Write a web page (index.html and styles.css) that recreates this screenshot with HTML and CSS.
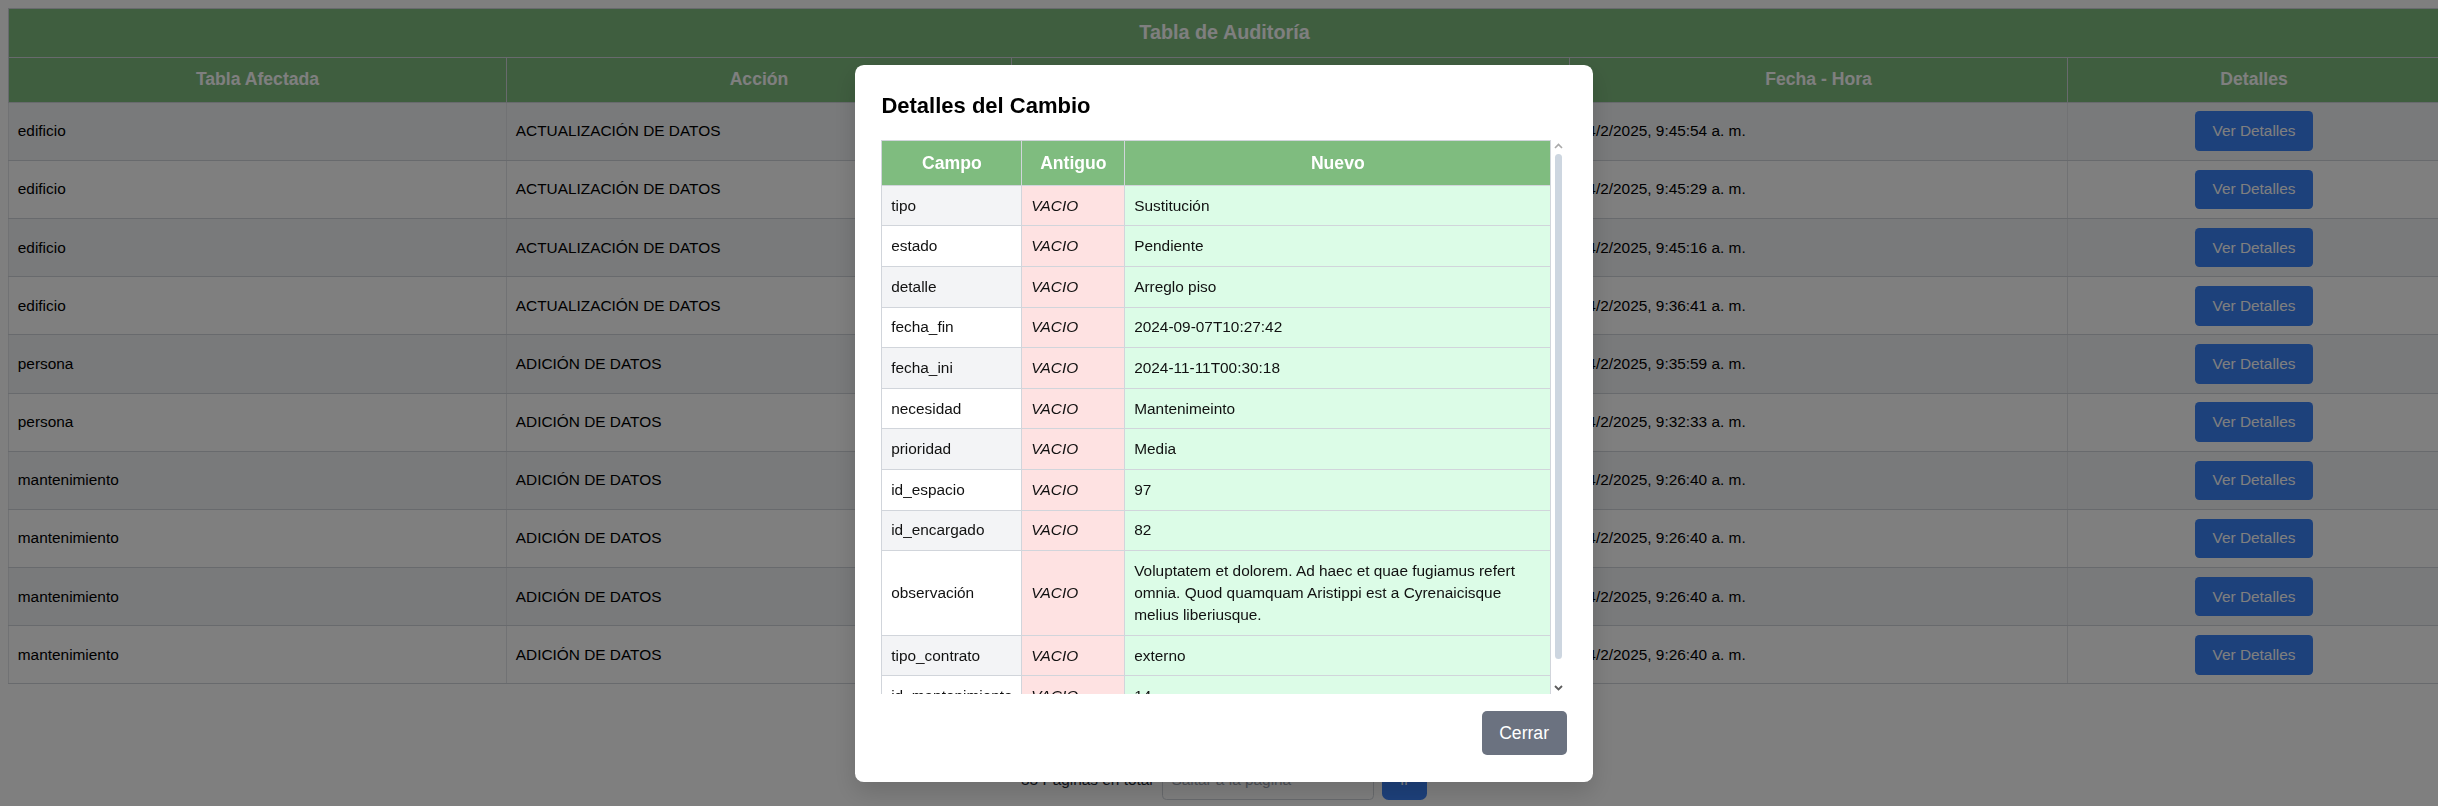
FILE: index.html
```html
<!DOCTYPE html>
<html lang="es">
<head>
<meta charset="utf-8">
<title>Tabla de Auditoría</title>
<link rel="stylesheet" href="styles.css">
</head>
<body>
<main class="page">
  <table class="audit">
    <colgroup>
      <col class="c-tabla"><col class="c-accion"><col class="c-usuario"><col class="c-fecha"><col class="c-detalles">
    </colgroup>
    <thead>
      <tr><th colspan="5" class="audit-title">Tabla de Auditoría</th></tr>
      <tr><th>Tabla Afectada</th><th>Acción</th><th>Usuario</th><th>Fecha - Hora</th><th>Detalles</th></tr>
    </thead>
    <tbody>
      <tr><td>edificio</td><td>ACTUALIZACIÓN DE DATOS</td><td>admin</td><td>14/2/2025, 9:45:54 a. m.</td><td class="cell-btn"><button class="btn-blue">Ver Detalles</button></td></tr>
      <tr><td>edificio</td><td>ACTUALIZACIÓN DE DATOS</td><td>admin</td><td>14/2/2025, 9:45:29 a. m.</td><td class="cell-btn"><button class="btn-blue">Ver Detalles</button></td></tr>
      <tr><td>edificio</td><td>ACTUALIZACIÓN DE DATOS</td><td>admin</td><td>14/2/2025, 9:45:16 a. m.</td><td class="cell-btn"><button class="btn-blue">Ver Detalles</button></td></tr>
      <tr><td>edificio</td><td>ACTUALIZACIÓN DE DATOS</td><td>admin</td><td>14/2/2025, 9:36:41 a. m.</td><td class="cell-btn"><button class="btn-blue">Ver Detalles</button></td></tr>
      <tr><td>persona</td><td>ADICIÓN DE DATOS</td><td>admin</td><td>14/2/2025, 9:35:59 a. m.</td><td class="cell-btn"><button class="btn-blue">Ver Detalles</button></td></tr>
      <tr><td>persona</td><td>ADICIÓN DE DATOS</td><td>admin</td><td>14/2/2025, 9:32:33 a. m.</td><td class="cell-btn"><button class="btn-blue">Ver Detalles</button></td></tr>
      <tr><td>mantenimiento</td><td>ADICIÓN DE DATOS</td><td>admin</td><td>14/2/2025, 9:26:40 a. m.</td><td class="cell-btn"><button class="btn-blue">Ver Detalles</button></td></tr>
      <tr><td>mantenimiento</td><td>ADICIÓN DE DATOS</td><td>admin</td><td>14/2/2025, 9:26:40 a. m.</td><td class="cell-btn"><button class="btn-blue">Ver Detalles</button></td></tr>
      <tr><td>mantenimiento</td><td>ADICIÓN DE DATOS</td><td>admin</td><td>14/2/2025, 9:26:40 a. m.</td><td class="cell-btn"><button class="btn-blue">Ver Detalles</button></td></tr>
      <tr><td>mantenimiento</td><td>ADICIÓN DE DATOS</td><td>admin</td><td>14/2/2025, 9:26:40 a. m.</td><td class="cell-btn"><button class="btn-blue">Ver Detalles</button></td></tr>
    </tbody>
  </table>

  <div class="pager">
    <span class="pager-total">33 Páginas en total</span>
    <input class="pager-input" type="text" placeholder="Saltar a la página">
    <button class="btn-blue pager-go">Ir</button>
  </div>
</main>

<div class="overlay">
  <div class="modal">
    <h2 class="modal-title">Detalles del Cambio</h2>
    <div class="scroll">
      <div class="scroll-view">
        <table class="diff">
          <colgroup><col class="d-campo"><col class="d-old"><col class="d-new"></colgroup>
          <thead>
            <tr><th>Campo</th><th>Antiguo</th><th>Nuevo</th></tr>
          </thead>
          <tbody>
            <tr><td class="f-campo">tipo</td><td class="f-old">VACIO</td><td class="f-new">Sustitución</td></tr>
            <tr><td class="f-campo">estado</td><td class="f-old">VACIO</td><td class="f-new">Pendiente</td></tr>
            <tr><td class="f-campo">detalle</td><td class="f-old">VACIO</td><td class="f-new">Arreglo piso</td></tr>
            <tr><td class="f-campo">fecha_fin</td><td class="f-old">VACIO</td><td class="f-new">2024-09-07T10:27:42</td></tr>
            <tr><td class="f-campo">fecha_ini</td><td class="f-old">VACIO</td><td class="f-new">2024-11-11T00:30:18</td></tr>
            <tr><td class="f-campo">necesidad</td><td class="f-old">VACIO</td><td class="f-new">Mantenimeinto</td></tr>
            <tr><td class="f-campo">prioridad</td><td class="f-old">VACIO</td><td class="f-new">Media</td></tr>
            <tr><td class="f-campo">id_espacio</td><td class="f-old">VACIO</td><td class="f-new">97</td></tr>
            <tr><td class="f-campo">id_encargado</td><td class="f-old">VACIO</td><td class="f-new">82</td></tr>
            <tr><td class="f-campo">observación</td><td class="f-old">VACIO</td><td class="f-new">Voluptatem et dolorem. Ad haec et quae fugiamus refert omnia. Quod quamquam Aristippi est a Cyrenaicisque melius liberiusque.</td></tr>
            <tr><td class="f-campo">tipo_contrato</td><td class="f-old">VACIO</td><td class="f-new">externo</td></tr>
            <tr><td class="f-campo">id_mantenimiento</td><td class="f-old">VACIO</td><td class="f-new">14</td></tr>
            <tr><td class="f-campo">id_empresa</td><td class="f-old">VACIO</td><td class="f-new">5</td></tr>
          </tbody>
        </table>
      </div>
      <div class="scrollbar" aria-hidden="true">
        <div class="sb-arrow">
          <svg class="sb-up" width="9" height="6" viewBox="0 0 9 6"><polyline points="1,5 4.5,1.5 8,5" fill="none" stroke="#a9a9a9" stroke-width="1.6"/></svg>
        </div>
        <div class="sb-track"><div class="sb-thumb"></div></div>
        <div class="sb-arrow">
          <svg class="sb-down" width="9" height="6" viewBox="0 0 9 6"><polyline points="1,1 4.5,4.5 8,1" fill="none" stroke="#5c5c5c" stroke-width="1.8"/></svg>
        </div>
      </div>
    </div>
    <div class="modal-foot">
      <button class="btn-gray">Cerrar</button>
    </div>
  </div>
</div>
</body>
</html>
```

FILE: styles.css
```css
html {
  overflow: hidden;
}

body {
  margin: 8px;
  width: 2432px;
  background: #ffffff;
  color: #000000;
  font-family: "Liberation Sans", Arial, sans-serif;
}

/* ---------- main audit table ---------- */
.audit {
  width: 2432px;
  border-collapse: collapse;
  table-layout: fixed;
  border: 1px solid #d1d5db;
}

.c-tabla { width: 498px; }
.c-accion { width: 505px; }
.c-usuario { width: 558px; }
.c-fecha { width: 498px; }
.c-detalles { width: 373px; }

.audit th {
  background: #7fbc7f;
  color: #ffffff;
  font-weight: 700;
  font-size: 17.6px;
  line-height: 26.4px;
  padding: 8.8px;
  border: 1px solid #d1d5db;
  text-align: center;
}

.audit th.audit-title {
  font-size: 19.8px;
  line-height: 30.8px;
  padding: 8.4px 8.8px;
}

.audit td {
  font-size: 15.4px;
  line-height: 22px;
  padding: 8.8px;
  border-top: 1px solid #d1d5db;
  border-bottom: 1px solid #d1d5db;
  border-left: 1px solid #e3e5e8;
  border-right: 1px solid #e3e5e8;
  vertical-align: middle;
  white-space: nowrap;
  overflow: hidden;
}

.audit tbody tr:nth-child(odd) td {
  background: #f3f4f6;
}

.audit tbody tr:nth-child(even) td {
  background: #ffffff;
}

.audit td.cell-btn {
  text-align: center;
}

.btn-blue {
  background: #3b82f6;
  color: #ffffff;
  border: 0;
  border-radius: 4.4px;
  padding: 8.8px 17.6px;
  font-family: "Liberation Sans", Arial, sans-serif;
  font-size: 15.4px;
  line-height: 22px;
}

.cell-btn .btn-blue {
  display: block;
  margin: 0 auto;
}

/* ---------- pager ---------- */
.pager {
  display: flex;
  justify-content: center;
  align-items: center;
  gap: 8.8px;
  margin-top: 76px;
}

.pager-total {
  font-size: 15.4px;
  line-height: 22px;
  color: #1f2937;
}

.pager-input {
  box-sizing: border-box;
  width: 212px;
  height: 39.6px;
  border: 1px solid #d1d5db;
  border-radius: 4.4px;
  padding: 0 8.8px;
  font-family: "Liberation Sans", Arial, sans-serif;
  font-size: 15.4px;
  color: #111827;
}

.pager-input::placeholder {
  color: #9ca3af;
}

.pager-go {
  border-radius: 6.6px;
}

/* ---------- modal ---------- */
.overlay {
  position: fixed;
  top: 0;
  left: 0;
  width: 2448px;
  height: 806px;
  box-sizing: border-box;
  padding-top: 65px;
  background: rgba(0, 0, 0, 0.5);
  display: flex;
  justify-content: center;
  align-items: flex-start;
}

.modal {
  width: 738px;
  box-sizing: border-box;
  padding: 26.4px;
  background: #ffffff;
  border-radius: 8.8px;
  box-shadow: 0 10px 25px rgba(0, 0, 0, 0.15);
}

.modal-title {
  margin: 0 0 17.6px;
  font-size: 22px;
  line-height: 30.8px;
  font-weight: 700;
  color: #000000;
}

.scroll {
  display: flex;
  height: 554px;
}

.scroll-view {
  flex: 1;
  overflow: hidden;
}

.diff {
  width: 100%;
  border-collapse: collapse;
  table-layout: fixed;
}

.d-campo { width: 140px; }
.d-old { width: 103px; }

.diff th {
  background: #7fbc7f;
  color: #ffffff;
  font-weight: 700;
  font-size: 17.6px;
  line-height: 26.4px;
  padding: 8.8px;
  border: 1px solid #d1d5db;
  text-align: center;
}

.diff td {
  font-size: 15.4px;
  line-height: 22px;
  padding: 8.8px;
  border: 1px solid #d1d5db;
  color: #111111;
  vertical-align: middle;
}

.diff td.f-campo {
  white-space: nowrap;
  background: #ffffff;
}

.diff tbody tr:nth-child(odd) td.f-campo {
  background: #f3f4f6;
}

.diff td.f-old {
  background: #fee2e2;
  font-style: italic;
}

.diff td.f-new {
  background: #dcfce7;
}

/* decorative scrollbar */
.scrollbar {
  width: 15.4px;
  flex: none;
  display: flex;
  flex-direction: column;
  align-items: center;
}

.sb-arrow {
  height: 12px;
  width: 100%;
  display: flex;
  align-items: center;
  justify-content: center;
  flex: none;
}

.sb-track {
  flex: 1;
  width: 100%;
  display: flex;
  justify-content: center;
}

.sb-thumb {
  margin-top: 2.4px;
  width: 7px;
  height: 505px;
  border-radius: 4px;
  background: #cdd6e0;
}

.modal-foot {
  display: flex;
  justify-content: flex-end;
  margin-top: 17.6px;
}

.btn-gray {
  background: #6b7280;
  color: #ffffff;
  border: 0;
  border-radius: 5px;
  padding: 8.8px 17.6px;
  font-family: "Liberation Sans", Arial, sans-serif;
  font-size: 17.6px;
  line-height: 26.4px;
}
```
